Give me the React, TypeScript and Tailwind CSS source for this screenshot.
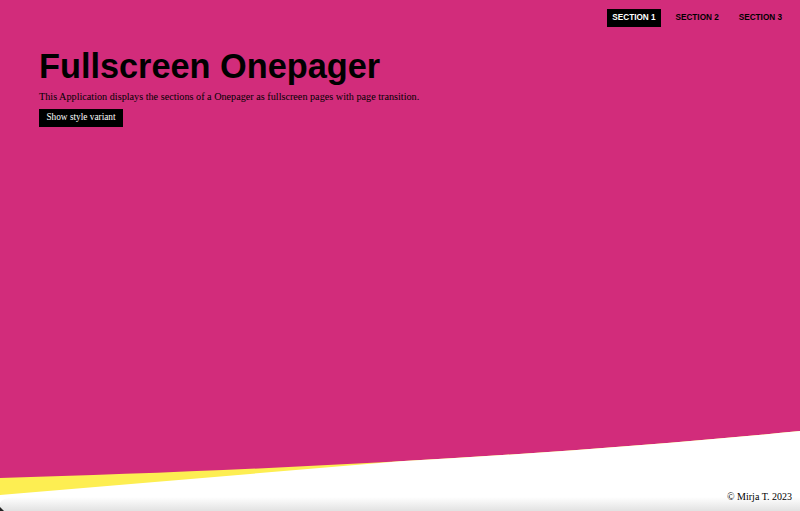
import React from "react";

const navItems = ["SECTION 1", "SECTION 2", "SECTION 3"];

export default function App() {
  return (
    <div className="relative w-full h-[511px] overflow-hidden bg-[#d22c7b]">
      <nav className="flex justify-end gap-[10px] pt-[9px] pr-[13px]">
        {navItems.map((item, i) => (
          <a
            key={item}
            className={
              i === 0
                ? "h-[18px] px-[5px] flex items-center text-[8.2px] font-bold leading-none font-['Liberation_Sans',Arial,sans-serif] bg-black text-white"
                : "h-[18px] px-[5px] flex items-center text-[8.2px] font-bold leading-none font-['Liberation_Sans',Arial,sans-serif] text-black"
            }
          >
            {item}
          </a>
        ))}
      </nav>
      <main className="pl-[39px] pt-[22px] flex flex-col items-start">
        <h1 className="text-[34.3px] leading-[34px] font-bold text-black font-['Liberation_Sans',Arial,sans-serif]">
          Fullscreen Onepager
        </h1>
        <p className="mt-[6px] text-[10.2px] leading-[15px] text-black font-['Liberation_Serif','Times_New_Roman',serif]">
          This Application displays the sections of a Onepager as fullscreen pages with page transition.
        </p>
        <button className="mt-[5px] h-[18px] w-[84px] bg-black text-white text-[9.3px] leading-none flex items-center justify-center font-['Liberation_Serif','Times_New_Roman',serif]">
          Show style variant
        </button>
      </main>
      <svg
        className="absolute left-0 bottom-0 w-full h-[90px]"
        viewBox="0 0 800 90"
        preserveAspectRatio="none"
      >
        <defs>
          <linearGradient id="shade" x1="0" y1="0" x2="0" y2="1">
            <stop offset="0" stopColor="#ffffff" />
            <stop offset="1" stopColor="#e2e2e2" />
          </linearGradient>
        </defs>
        <path d="M0 57 C250 50 550 35 800 10 L800 90 L0 90 Z" fill="#fdee52" />
        <path d="M0 74 L400 40.25 C537.5 32.5 675 22.5 800 10 L800 90 L0 90 Z" fill="#ffffff" />
        <path d="M14 76 L800 76 L800 90 L0 90 L0 82 Q2 77 14 76 Z" fill="url(#shade)" />
        <path d="M0 86 L4 90 L0 90 Z" fill="#222" />
      </svg>
      <div className="absolute right-[8px] bottom-[9px] text-[10px] leading-none text-black font-['Liberation_Serif','Times_New_Roman',serif]">
        © Mirja T. 2023
      </div>
    </div>
  );
}
